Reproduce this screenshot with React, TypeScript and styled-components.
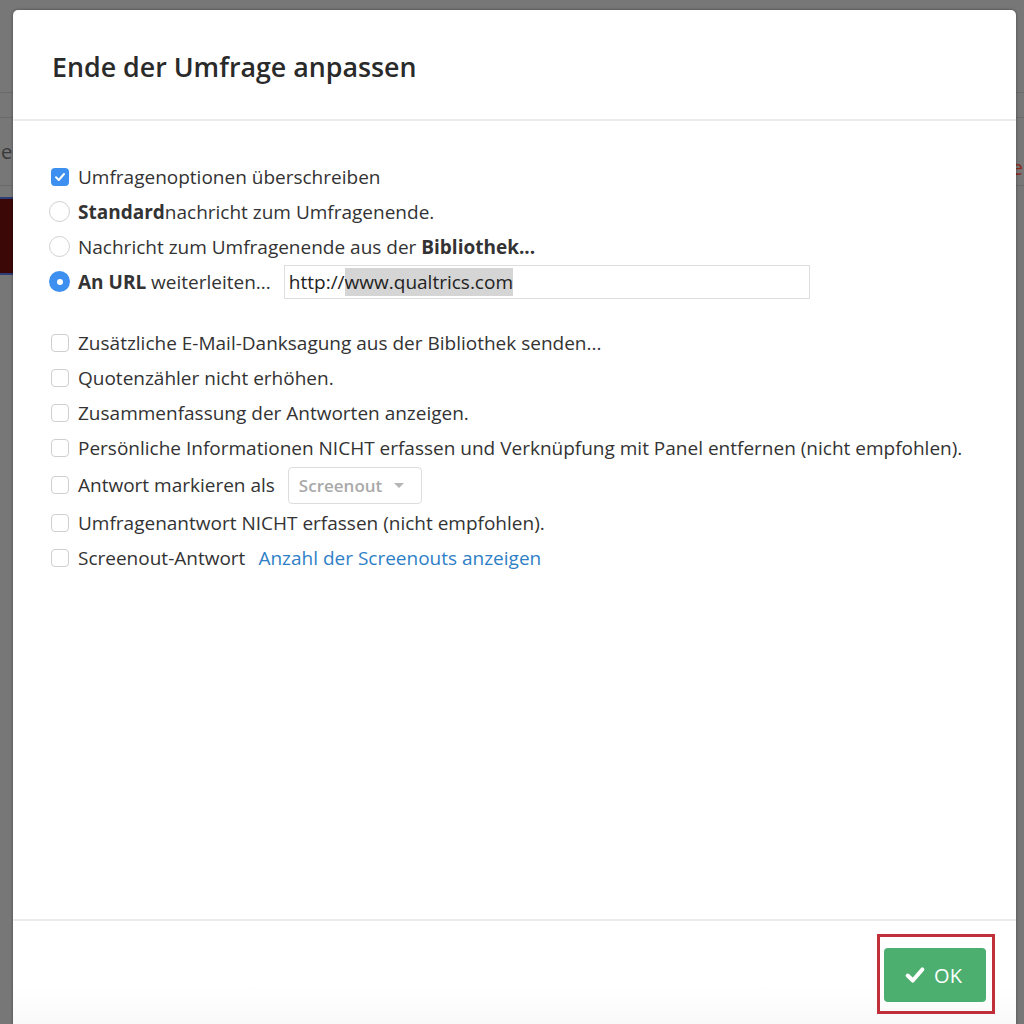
import React from "react";
import styled, { createGlobalStyle } from "styled-components";

const GlobalStyle = createGlobalStyle`
  html, body {
    margin: 0;
    padding: 0;
    width: 1024px;
    height: 1024px;
    overflow: hidden;
    background: #777777;
    font-family: "Open Sans", "Liberation Sans", Arial, sans-serif;
  }
  * { box-sizing: border-box; }
`;

const Page = styled.div`
  position: relative;
  width: 1024px;
  height: 1024px;
  overflow: hidden;
  background: #777777;
`;

const BgBar = styled.div<{ $h: number }>`
  height: ${(p) => p.$h}px;
  border-bottom: 1px solid #6a6a6a;
`;

const BgTextRow = styled.div`
  height: 68px;
  display: flex;
  justify-content: space-between;
  align-items: center;
  padding: 0 1px 0 1px;
  border-bottom: 1px solid #6a6a6a;
  font-size: 20px;
`;

const BgText = styled.span<{ $red?: boolean }>`
  color: ${(p) => (p.$red ? "#8a2a1c" : "#3a3a3a")};
  margin-top: ${(p) => (p.$red ? "32px" : "0")};
`;

const BgBlock = styled.div`
  margin-top: 11px;
  height: 78px;
  width: 200px;
  background: #3c0707;
  border-top: 2px solid #2b3c78;
  border-bottom: 2px solid #2b3c78;
`;

const Overlay = styled.div`
  position: absolute;
  left: 13px;
  top: 10px;
  width: 1003px;
  height: 1040px;
`;

const Modal = styled.div`
  width: 100%;
  height: 100%;
  background: #ffffff;
  border-radius: 5px;
  box-shadow: 0 0 3px rgba(0, 0, 0, 0.45);
  display: flex;
  flex-direction: column;
  overflow: hidden;
`;

const Header = styled.div`
  height: 111px;
  padding: 0 39px;
  display: flex;
  align-items: center;
  border-bottom: 2px solid #ececec;
`;

const Title = styled.h1`
  margin: 4px 0 0 0;
  font-size: 26.8px;
  font-weight: 600;
  color: #2a2a2a;
`;

const Body = styled.div`
  flex: 1;
  padding: 38px 38px 0 38px;
  display: flex;
  flex-direction: column;
  gap: 26px;
`;

const Group = styled.div`
  display: flex;
  flex-direction: column;
`;

const Row = styled.div<{ $h?: number }>`
  height: ${(p) => p.$h ?? 35}px;
  display: flex;
  align-items: center;
  font-size: 19px;
  color: #333333;
`;

const Label = styled.span`
  margin-left: 9px;
  white-space: nowrap;
`;

const Bold = styled.b`
  font-weight: 700;
  color: #333;
`;

const CheckBox = styled.span<{ $checked?: boolean }>`
  width: 18px;
  height: 18px;
  border-radius: 4px;
  flex-shrink: 0;
  display: inline-flex;
  align-items: center;
  justify-content: center;
  background: ${(p) => (p.$checked ? "#3d8ff0" : "#fff")};
  border: ${(p) => (p.$checked ? "none" : "1px solid #cfcfcf")};
`;

const Radio = styled.span<{ $checked?: boolean }>`
  width: 21px;
  height: 21px;
  margin-left: -2px;
  margin-right: -1px;
  border-radius: 50%;
  flex-shrink: 0;
  display: inline-flex;
  align-items: center;
  justify-content: center;
  background: ${(p) => (p.$checked ? "#3d8ff0" : "#fff")};
  border: ${(p) => (p.$checked ? "none" : "1.5px solid #d0d0d0")};
`;

const Dot = styled.span`
  width: 6px;
  height: 6px;
  border-radius: 50%;
  background: #fff;
`;

const UrlInput = styled.div`
  margin-left: 13px;
  width: 526px;
  height: 34px;
  border: 1px solid #dedede;
  display: flex;
  align-items: center;
  padding-left: 4px;
  font-size: 19px;
  color: #222;
`;

const Selected = styled.span`
  background: #d5d5d5;
  padding: 1px 0;
`;

const Select = styled.div`
  margin-left: 13px;
  width: 134px;
  height: 37px;
  border: 1px solid #dddddd;
  border-radius: 4px;
  display: flex;
  align-items: center;
  padding-left: 10px;
  gap: 12px;
  color: #a9a9a9;
  font-size: 17px;
  font-weight: 600;
`;

const Caret = styled.span`
  width: 0;
  height: 0;
  border-left: 5px solid transparent;
  border-right: 5px solid transparent;
  border-top: 5px solid #b5b5b5;
`;

const Link = styled.a`
  margin-left: 13px;
  color: #2f7fc6;
  text-decoration: none;
  white-space: nowrap;
`;

const Footer = styled.div`
  height: 131px;
  border-top: 2px solid #ececec;
  background: linear-gradient(to bottom, #ffffff 0%, #ffffff 50%, #f5f5f5 100%);
  display: flex;
  justify-content: flex-end;
  align-items: flex-start;
  padding: 13px 21px 0 0;
`;

const Highlight = styled.div`
  border: 3px solid #c0303a;
  padding: 11px 6px 9px 4px;
`;

const OkButton = styled.button`
  width: 102px;
  height: 54px;
  border: none;
  border-radius: 4px;
  background: #4caf6f;
  color: #fff;
  font-family: "Open Sans", "Liberation Sans", Arial, sans-serif;
  font-size: 20px;
  display: flex;
  align-items: center;
  justify-content: center;
  gap: 8px;
  padding: 0 4px 0 0;
`;

const Check = ({ size = 12, w = 2 }: { size?: number; w?: number }) => (
  <svg width={size} height={size} viewBox="0 0 12 12" fill="none">
    <path d="M2 6.3 L4.8 9 L10 3" stroke="#fff" strokeWidth={w} strokeLinecap="round" strokeLinejoin="round" />
  </svg>
);

const BoxRow = ({ children, h }: { children: React.ReactNode; h?: number }) => (
  <Row $h={h}>
    <CheckBox />
    {children}
  </Row>
);

export default function App() {
  return (
    <>
      <GlobalStyle />
      <Page>
        <BgBar $h={93} />
        <BgBar $h={25} />
        <BgTextRow>
          <BgText>e</BgText>
          <BgText $red>e</BgText>
        </BgTextRow>
        <BgBlock />
        <Overlay>
          <Modal>
            <Header>
              <Title>Ende der Umfrage anpassen</Title>
            </Header>
            <Body>
              <Group>
                <Row>
                  <CheckBox $checked>
                    <Check />
                  </CheckBox>
                  <Label>Umfragenoptionen überschreiben</Label>
                </Row>
                <Row>
                  <Radio />
                  <Label>
                    <Bold>Standard</Bold>nachricht zum Umfragenende.
                  </Label>
                </Row>
                <Row>
                  <Radio />
                  <Label>
                    Nachricht zum Umfragenende aus der <Bold>Bibliothek...</Bold>
                  </Label>
                </Row>
                <Row>
                  <Radio $checked>
                    <Dot />
                  </Radio>
                  <Label>
                    <Bold>An URL</Bold> weiterleiten...
                  </Label>
                  <UrlInput>
                    http://<Selected>www.qualtrics.com</Selected>
                  </UrlInput>
                </Row>
              </Group>
              <Group>
                <BoxRow>
                  <Label>Zusätzliche E-Mail-Danksagung aus der Bibliothek senden...</Label>
                </BoxRow>
                <BoxRow>
                  <Label>Quotenzähler nicht erhöhen.</Label>
                </BoxRow>
                <BoxRow>
                  <Label>Zusammenfassung der Antworten anzeigen.</Label>
                </BoxRow>
                <BoxRow>
                  <Label>
                    Persönliche Informationen NICHT erfassen und Verknüpfung mit Panel entfernen (nicht empfohlen).
                  </Label>
                </BoxRow>
                <BoxRow h={40}>
                  <Label>Antwort markieren als</Label>
                  <Select>
                    Screenout
                    <Caret />
                  </Select>
                </BoxRow>
                <BoxRow>
                  <Label>Umfragenantwort NICHT erfassen (nicht empfohlen).</Label>
                </BoxRow>
                <BoxRow>
                  <Label>Screenout-Antwort</Label>
                  <Link href="#">Anzahl der Screenouts anzeigen</Link>
                </BoxRow>
              </Group>
            </Body>
            <Footer>
              <Highlight>
                <OkButton>
                  <Check size={22} w={2.2} />
                  OK
                </OkButton>
              </Highlight>
            </Footer>
          </Modal>
        </Overlay>
      </Page>
    </>
  );
}
